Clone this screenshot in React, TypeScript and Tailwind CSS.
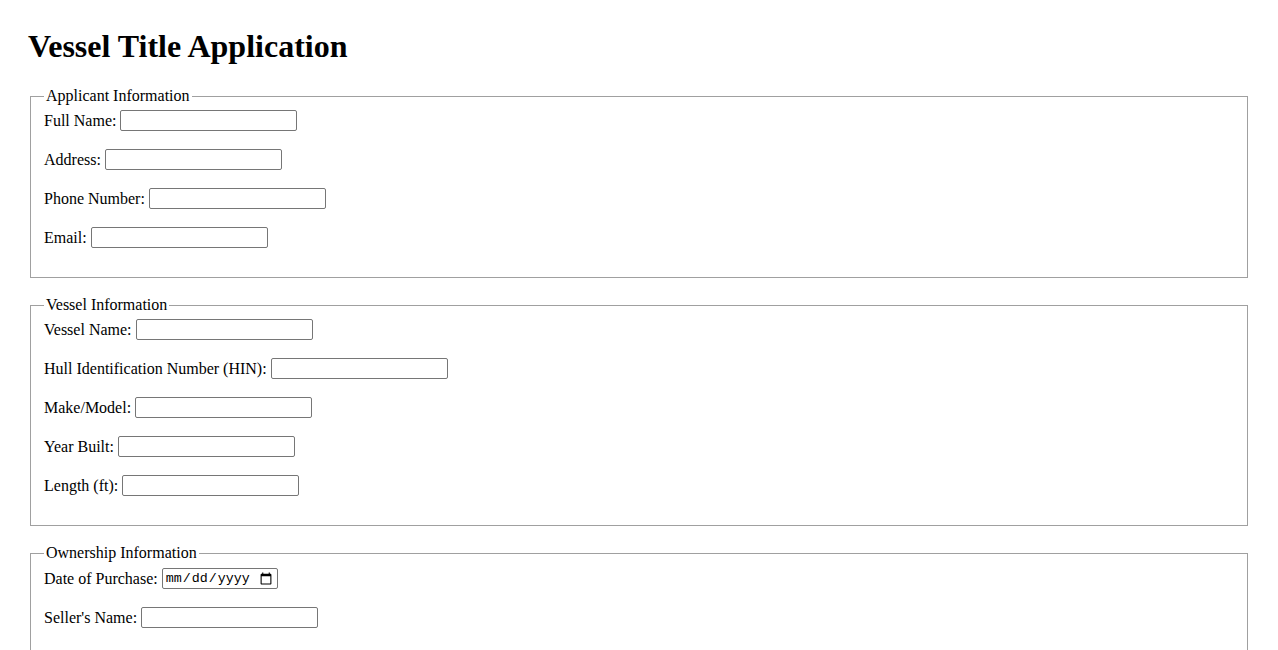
const applicant = ["Full Name:", "Address:", "Phone Number:", "Email:"];
const vessel = ["Vessel Name:", "Hull Identification Number (HIN):", "Make/Model:", "Year Built:", "Length (ft):"];

function Field({ label, type = "text" }: { label: string; type?: string }) {
  return (
    <div className="flex items-center gap-1 h-[21px] mb-[18px]">
      <label>{label}</label>
      {type === "date" ? (
        <input
          type="date"
          className="w-[116px] h-[21px] border border-[#767676] rounded-[2px] px-[2px] text-[13.33px] font-['Liberation_Mono',monospace] bg-white"
        />
      ) : (
        <input
          type="text"
          className="w-[177px] h-[21px] border border-[#767676] rounded-[2px] px-[2px] text-[13.33px] font-['Liberation_Sans',sans-serif] bg-white"
        />
      )}
    </div>
  );
}

function Section({ title, children }: { title: string; children: React.ReactNode }) {
  return (
    <fieldset className="mx-[2px] mb-[15px] px-[13px] pt-[2px] pb-[11px] border border-[#a0a0a0]">
      <legend className="px-[2px]">{title}</legend>
      {children}
    </fieldset>
  );
}

export default function App() {
  return (
    <div className="min-h-screen bg-white text-black font-['Liberation_Serif',serif] text-[16px] px-[28px] pt-[28px]">
      <h1 className="text-[32px] font-bold leading-[37px] mb-[19px]">Vessel Title Application</h1>

      <Section title="Applicant Information">
        {applicant.map((l) => (
          <Field key={l} label={l} />
        ))}
      </Section>

      <Section title="Vessel Information">
        {vessel.map((l) => (
          <Field key={l} label={l} />
        ))}
      </Section>

      <Section title="Ownership Information">
        <div className="pt-[1px]">
          <Field label="Date of Purchase:" type="date" />
          <Field label="Seller's Name:" />
        </div>
      </Section>
    </div>
  );
}
